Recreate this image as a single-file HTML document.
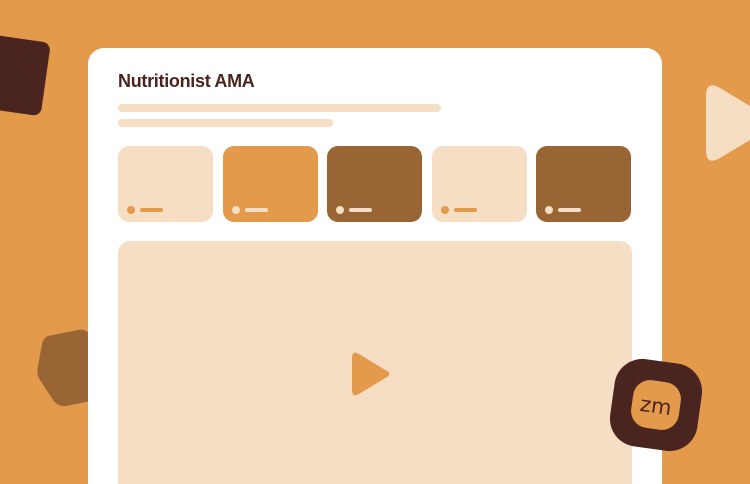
<!DOCTYPE html>
<html><head><style>
html,body{margin:0;padding:0;width:750px;height:484px;overflow:hidden}
body{background:#e39a4b;position:relative;font-family:"Liberation Sans",sans-serif}
.card{position:absolute;left:88px;top:48px;width:574px;height:436px;background:#fff;border-radius:16px 16px 0 0}
h1{position:absolute;left:118px;top:71px;margin:0;font-size:18px;font-weight:bold;color:#4a2520;letter-spacing:-0.3px}
.l{position:absolute;height:8px;border-radius:4px;background:#f5dec4;left:118px}
.t{position:absolute;top:146px;width:95px;height:76px;border-radius:11px}
.t i{position:absolute;left:9px;top:60px;width:8px;height:8px;border-radius:50%}
.t b{position:absolute;left:22px;top:62px;width:23px;height:4px;border-radius:2px}
.lt{background:#f5dec4}.lt i,.lt b{background:#e39a4b}
.or{background:#e39a4b}.or i,.or b{background:#f5dec4}
.br{background:#9a6534}.br i,.br b{background:#f5dec4}
.v{position:absolute;left:118px;top:241px;width:514px;height:243px;border-radius:12px 12px 0 0;background:#f5dec4}
</style></head><body>
<svg style="position:absolute;left:0;top:0" width="750" height="484">
<rect x="-20" y="38" width="66" height="74" rx="8" fill="#4a2520" transform="rotate(8 13 75)"/>
<path d="M48 336 L78 330 Q88 328 91 338 L96 390 Q96 400 86 402 L66 406 Q58 407 53 400 L40 380 Q36 374 38 366 L42 344 Q44 337 48 336Z" fill="#9a6534"/>
<path d="M706 96 Q706 80 720 88 L750 106 L750 140 L720 158 Q706 166 706 150Z" fill="#f5dec4"/>
</svg>
<div class="card"></div>
<h1>Nutritionist AMA</h1>
<div class="l" style="top:104px;width:323px"></div>
<div class="l" style="top:119px;width:215px"></div>
<div class="t lt" style="left:118px"><i></i><b></b></div>
<div class="t or" style="left:223px"><i></i><b></b></div>
<div class="t br" style="left:327px"><i></i><b></b></div>
<div class="t lt" style="left:432px"><i></i><b></b></div>
<div class="t br" style="left:536px"><i></i><b></b></div>
<div class="v"></div>
<svg style="position:absolute;left:0;top:0" width="750" height="484">
<path d="M352 358 Q352 350 359 354 L387 371 Q392 374 387 377 L359 394 Q352 398 352 390Z" fill="#e39a4b"/>
<g transform="rotate(8 656 405)">
<rect x="612" y="361" width="88" height="88" rx="28" fill="#4a2520"/>
<rect x="632" y="381" width="48" height="48" rx="17" fill="#e39a4b"/>
<text x="656" y="413" text-anchor="middle" font-family="DejaVu Sans,sans-serif" font-size="21" fill="#4a2520">zm</text>
</g>
</svg>
</body></html>
